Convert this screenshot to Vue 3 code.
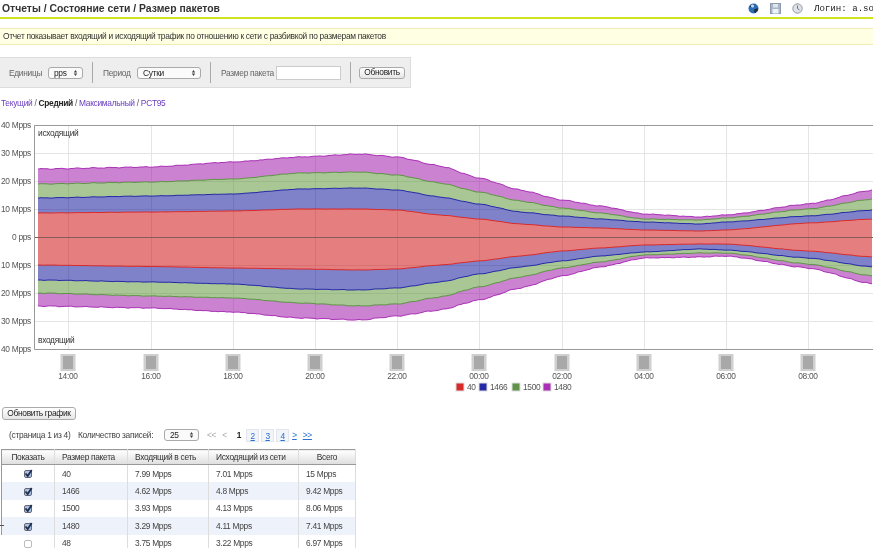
<script setup>
const xs = [38, 151, 233, 300, 360, 397, 440, 479, 520, 562, 600, 644, 700, 726, 808, 873]
const out = [
  [213, 198, 184, 169], [212, 196, 182, 167], [211, 194, 179, 162], [209, 189, 173, 157],
  [209, 188, 172, 154], [210, 190, 175, 157], [215, 197, 183, 166], [219, 204, 192, 178],
  [224, 212, 201, 190], [227, 216, 208, 200], [228, 219, 213, 206], [230, 222, 219, 214],
  [231, 224, 220, 217], [230, 222, 218, 215], [223, 216, 209, 204], [219, 210, 199, 190]
]
const inc = [
  [265, 280, 293, 306], [266.5, 282, 296, 308], [268, 284, 298, 312], [269, 289, 303, 318],
  [270, 290, 306, 320], [269, 288, 304, 316], [265, 282, 297, 310], [261, 274, 287, 300],
  [256, 267, 277, 288], [251, 261, 268, 276], [248, 256, 262, 267], [245, 252, 255, 258],
  [244, 249, 253, 257], [244, 250, 253, 256], [251, 258, 264, 268], [257, 267, 276, 284]
]
function sample(table, s, x) {
  let i = 0
  while (i < xs.length - 2 && x > xs[i + 1]) i++
  const t = (x - xs[i]) / (xs[i + 1] - xs[i])
  const k = t * 0.5 + t * t * (3 - 2 * t) * 0.5
  return table[i][s] * (1 - k) + table[i + 1][s] * k
}
function jitter(x, s, seed) {
  const v = Math.sin(x * 0.37 + seed) + Math.sin(x * 0.83 + seed * 2.1) * 0.7 + Math.sin(x * 1.71 + seed * 3.3) * 0.4
  return v * (0.08 + 0.07 * s)
}
const grid = []
for (let x = 38; x <= 874; x += 3) grid.push(x)
function line(table, s, seed) {
  return grid.map((x) => [x, sample(table, s, x) + jitter(x, s, seed)])
}
function toD(pts) {
  return pts.map((p, i) => (i ? 'L' : 'M') + p[0] + ' ' + p[1].toFixed(1)).join('')
}
const colors = [
  { fill: '#cb0000', line: '#d92a2a' },
  { fill: '#000393', line: '#2429a6' },
  { fill: '#518f2b', line: '#5f9448' },
  { fill: '#9705a1', line: '#aa30b6' }
]
function bands(table, base, seed) {
  return colors.map((c, s) => {
    const top = line(table, s, seed)
    const low = s === 0 ? grid.map((x) => [x, base]) : line(table, s - 1, seed)
    return {
      key: seed + '-' + s,
      area: toD(top) + toD(low.slice().reverse()).replace('M', 'L') + 'Z',
      stroke: toD(top),
      color: c
    }
  })
}
const series = [...bands(out, 237, 1.3), ...bands(inc, 237, 4.1)]
const yAxis = [
  ['40 Mpps', 125], ['30 Mpps', 153], ['20 Mpps', 181], ['10 Mpps', 209], ['0 pps', 237],
  ['10 Mpps', 265], ['20 Mpps', 293], ['30 Mpps', 321], ['40 Mpps', 349]
]
const xAxis = [
  ['14:00', 68], ['16:00', 151], ['18:00', 233], ['20:00', 315], ['22:00', 397],
  ['00:00', 479], ['02:00', 562], ['04:00', 644], ['06:00', 726], ['08:00', 808]
]
const legend = [
  ['40', 456, '#d92a2a'], ['1466', 479, '#2429a6'], ['1500', 512, '#5f9448'], ['1480', 543, '#aa30b6']
]
const rows = [
  { on: true, size: '40', rx: '7.99 Mpps', tx: '7.01 Mpps', all: '15 Mpps' },
  { on: true, size: '1466', rx: '4.62 Mpps', tx: '4.8 Mpps', all: '9.42 Mpps' },
  { on: true, size: '1500', rx: '3.93 Mpps', tx: '4.13 Mpps', all: '8.06 Mpps' },
  { on: true, size: '1480', rx: '3.29 Mpps', tx: '4.11 Mpps', all: '7.41 Mpps' },
  { on: false, size: '48', rx: '3.75 Mpps', tx: '3.22 Mpps', all: '6.97 Mpps' }
]
</script>

<template>
  <div class="page">
    <header class="top">
      <h1>Отчеты / Состояние сети / Размер пакетов</h1>
      <div class="tools">
        <svg width="11" height="11" viewBox="0 0 11 11"><circle cx="5.5" cy="5.5" r="5" fill="#2a6db8"/><path d="M1.500 3.500l2.500-2.500 2.500.5-.5 2.500-2.500.5zM6 6.500l3.500-1.500.5 2-2.500 3-1.500-1z" fill="#22303f"/><circle cx="4.500" cy="3" r="1.700" fill="#b8daf4"/></svg>
        <svg width="11" height="11" viewBox="0 0 11 11"><rect x=".5" y=".5" width="10" height="10" fill="#a9b6c6" stroke="#8d9bad"/><rect x="3" y="1" width="5" height="3.500" fill="#dfe5ec"/><rect x="2.500" y="6" width="6" height="4.500" fill="#eef1f5"/></svg>
        <svg width="11" height="11" viewBox="0 0 11 11"><circle cx="5.5" cy="5.5" r="4.700" fill="#dfe3e8" stroke="#8f98a3"/><path d="M5.500 2.500v3l2 1.500" fill="none" stroke="#6c7580"/></svg>
        <span class="login">Логин: a.soloviev</span>
      </div>
    </header>

    <div class="notice">Отчет показывает входящий и исходящий трафик по отношению к сети с разбивкой по размерам пакетов</div>

    <form class="filters" @submit.prevent>
      <span class="lab l1">Единицы</span>
      <span class="sel w-pps">pps<svg class="ud" width="5" height="8" viewBox="0 0 5 8"><path d="M2.500 1l1.700 2.500H.8zM2.500 7l1.700-2.500H.8z"/></svg></span>
      <i class="sep"></i>
      <span class="lab l2">Период</span>
      <span class="sel w-per">Сутки<svg class="ud" width="5" height="8" viewBox="0 0 5 8"><path d="M2.500 1l1.700 2.500H.8zM2.500 7l1.700-2.500H.8z"/></svg></span>
      <i class="sep"></i>
      <span class="lab l3">Размер пакета</span>
      <input class="field" type="text" />
      <i class="sep last"></i>
      <button class="btn">Обновить</button>
    </form>

    <nav class="views">
      <a>Текущий</a> / <b>Средний</b> / <a>Максимальный</a> / <a>PCT95</a>
    </nav>

    <svg class="chart" width="873" height="283" viewBox="0 115 873 283">
      <g stroke="#e5e5e5" stroke-width="1">
        <line v-for="a in yAxis" :key="a[1]" x1="34" :x2="873" :y1="a[1] + 0.5" :y2="a[1] + 0.5" />
        <line v-for="a in xAxis" :key="a[0]" :x1="a[1] + 0.5" :x2="a[1] + 0.5" y1="125" y2="349" />
      </g>
      <path v-for="b in series" :key="b.key" :d="b.area" :fill="b.color.fill" fill-opacity=".5" />
      <path v-for="b in series" :key="'l' + b.key" :d="b.stroke" :stroke="b.color.line" stroke-width="1" fill="none" />
      <line x1="34" x2="873" y1="237.5" y2="237.5" stroke="#8a5a5a" stroke-width="1" />
      <path d="M873 125.500H34.500V349.500H873" fill="none" stroke="#999" stroke-width="1" />
      <text v-for="a in yAxis" :key="'t' + a[1]" x="31" :y="a[1] + 3" text-anchor="end" class="tick">{{ a[0] }}</text>
      <text x="38" y="136" class="note">исходящий</text>
      <text x="38" y="343" class="note">входящий</text>
      <g v-for="a in xAxis" :key="'p' + a[0]">
        <rect :x="a[1] - 7.5" y="354" width="15" height="17" fill="#cfcfcf" />
        <rect :x="a[1] - 5" y="356" width="10" height="13" fill="#a8a8a8" />
        <text :x="a[1]" y="379" text-anchor="middle" class="tick">{{ a[0] }}</text>
      </g>
      <g v-for="l in legend" :key="l[0]">
        <rect :x="l[1]" y="383" width="8" height="8" :fill="l[2]" stroke="#ddd" />
        <text :x="l[1] + 11" y="390" class="tick">{{ l[0] }}</text>
      </g>
    </svg>

    <button class="btn refresh">Обновить график</button>

    <div class="pager">
      <span class="p1">(страница 1 из 4)</span>
      <span class="count">Количество записей:</span>
      <span class="sel w-cnt">25<svg class="ud" width="5" height="8" viewBox="0 0 5 8"><path d="M2.500 1l1.700 2.500H.8zM2.500 7l1.700-2.500H.8z"/></svg></span>
      <span class="dim">&lt;&lt;</span>
      <span class="dim">&lt;</span>
      <b class="cur">1</b>
      <a class="pg">2</a><a class="pg">3</a><a class="pg">4</a>
      <a class="nx">&gt;</a><a class="nx">&gt;&gt;</a>
    </div>

    <div class="table-wrap">
      <table class="grid">
        <thead>
          <tr><th class="c1">Показать</th><th class="c2 l">Размер пакета</th><th class="c3 l">Входящий в сеть</th><th class="c4 l">Исходящий из сети</th><th class="c5">Всего</th></tr>
        </thead>
        <tbody>
          <tr v-for="r in rows" :key="r.size">
            <td class="mid">
              <span class="cb" :class="{ on: r.on }">
                <svg v-if="r.on" width="9" height="9" viewBox="0 0 9 9"><path d="M1.500 4.500l2.200 2.500 4-6" fill="none" stroke="#1d2c4a" stroke-width="1.800"/></svg>
              </span>
            </td>
            <td>{{ r.size }}</td><td>{{ r.rx }}</td><td>{{ r.tx }}</td><td>{{ r.all }}</td>
          </tr>
        </tbody>
      </table>
      <i class="mark"></i>
    </div>
  </div>
</template>

<style scoped>
.page { width: 873px; height: 548px; overflow: hidden; background: #fff; color: #333; font: 8.400px "Liberation Sans", Arial, sans-serif; letter-spacing: -.3px; filter: blur(.35px); }
.top { display: flex; justify-content: space-between; align-items: center; height: 17px; border-bottom: 2px solid #cfe31f; padding-left: 2px; }
h1 { margin: 0; font-size: 10.400px; letter-spacing: 0; font-weight: bold; color: #333; white-space: nowrap; }
.tools { display: flex; align-items: center; gap: 11px; width: 125px; flex: none; overflow: hidden; white-space: nowrap; }
.tools svg { flex: none; }
.login { font: 9.100px "Liberation Mono", monospace; letter-spacing: 0; color: #222; flex: none; }
.notice { margin-top: 9px; height: 17px; line-height: 15px; box-sizing: border-box; padding-left: 3px; background: #ffffe3; border: solid #f0ecb4; border-width: 1px 0; color: #333; }
.filters { margin: 12px 0 0; width: 411px; height: 31px; box-sizing: border-box; display: flex; align-items: center; padding-left: 9px; background: #eeeeee; border: 1px solid #ddd; border-left: 0; color: #666; }
.lab { white-space: nowrap; flex: none; }
.l1 { width: 32px; }
.l2 { width: 27px; }
.l3 { width: 52px; }
.sel { position: relative; display: inline-block; flex: none; box-sizing: border-box; height: 12px; line-height: 10px; border: 1px solid #aaa; border-radius: 3px; background: #fafafa; color: #222; padding-left: 5px; }
.ud { position: absolute; right: 4px; top: 1px; fill: #444; }
.w-pps { width: 35px; margin-left: 7px; }
.w-per { width: 64px; margin-left: 7px; }
.w-cnt { width: 35px; margin-left: 0; }
.sep { flex: none; width: 1px; height: 21px; background: #aaa; margin: 0 10px 0 9px; }
.sep.last { margin-right: 8px; }
.field { flex: none; width: 65px; height: 14px; box-sizing: border-box; margin: 0 0 0 3px; padding: 0; border: 1px solid #ccc; background: #fff; }
.btn { font: 8.400px "Liberation Sans", Arial, sans-serif; letter-spacing: -.3px; color: #222; height: 12px; padding: 0; border: 1px solid #aaa; border-radius: 3px; background: linear-gradient(#fff, #e6e6e6); line-height: 9px; white-space: nowrap; }
.filters .btn { flex: none; width: 46px; }
.views { margin-top: 11px; padding-left: 1px; height: 9px; line-height: 9px; white-space: pre-wrap; color: #555; }
.views a { color: #6a3fc0; }
.views b { color: #222; }
.chart { display: block; margin-top: 7px; }
.tick { font: 8.400px "Liberation Sans", Arial, sans-serif; letter-spacing: -.3px; fill: #555; }
.note { font: 8.400px "Liberation Sans", Arial, sans-serif; letter-spacing: -.3px; fill: #333; }
.refresh { display: block; margin: 9px 0 0 2px; width: 74px; height: 13px; }
.pager { display: flex; align-items: center; height: 12px; margin: 9px 0 0 9px; color: #444; white-space: nowrap; }
.p1 { flex: none; width: 69px; }
.count { flex: none; width: 86px; }
.dim { color: #aaa; margin-right: 6px; }
.w-cnt + .dim { margin-left: 8px; }
.cur { color: #222; margin: 0 5px 0 4px; }
.pg { flex: none; width: 13px; height: 13px; line-height: 12px; margin-right: 2px; text-align: center; background: #f1f4f8; border: 1px solid #e2e6ec; box-sizing: border-box; color: #2a6fd0; text-decoration: underline; }
.nx { color: #2a6fd0; text-decoration: underline; margin: 0 6px 0 0; }
.pg + .nx { margin-left: 1px; }
.table-wrap { position: relative; margin: 8px 0 0 1px; }
.grid { width: 355px; table-layout: fixed; border-collapse: collapse; border: 1px solid #999; border-bottom: 0; color: #444; white-space: nowrap; }
.grid th, .grid td { box-sizing: border-box; }
.grid th { height: 15px; padding: 0; font-weight: normal; color: #333; background: linear-gradient(#fff, #dedede); border-right: 1px solid #ddd; border-bottom: 1px solid #999; text-align: center; }
.grid th.l { text-align: left; padding-left: 7px; }
.c1 { width: 53px; }
.c2 { width: 73px; }
.c3 { width: 81px; }
.c4 { width: 90px; }
.grid td { height: 17.500px; padding: 0 0 0 7px; border-right: 1px solid #ddd; }
.grid td.mid { padding: 0; text-align: center; }
.grid tbody tr:nth-child(even) td { background: #eef3fb; }
.grid tbody tr:last-child td.mid { border-left: 1px solid #fff; }
.cb { display: inline-block; box-sizing: border-box; width: 8px; height: 8px; vertical-align: middle; border: 1px solid #bbb; border-radius: 2px; background: #fff; position: relative; }
.cb.on { background: #a9c1e2; border-color: #667; }
.cb svg { position: absolute; left: -1px; top: -2px; }
.mark { position: absolute; left: -1px; top: 76px; width: 4px; height: 1px; background: #555; }
</style>

<style>
html, body { margin: 0; overflow: hidden; }
</style>
